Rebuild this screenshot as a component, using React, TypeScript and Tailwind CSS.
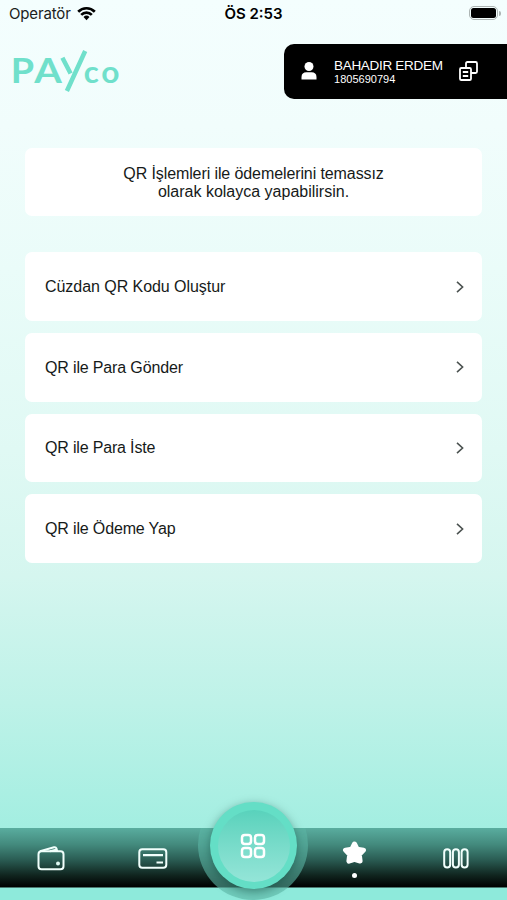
import React from "react";

const items = [
  { label: "Cüzdan QR Kodu Oluştur", spacing: "tracking-[-0.05px]" },
  { label: "QR ile Para Gönder", spacing: "tracking-[-0.15px]" },
  { label: "QR ile Para İste", spacing: "tracking-[-0.17px]" },
  { label: "QR ile Ödeme Yap", spacing: "tracking-[-0.15px]" },
];

function StatusBar() {
  return (
    <div className="grid h-[28px] grid-cols-3 items-center pl-[8px] pr-[8px] font-['Inter',sans-serif] text-[15px] text-[#1b2221]">
      <div className="flex items-center gap-[6px] pl-px">
        <span className="tracking-[-0.15px]">Operatör</span>
        <svg width="19" height="15" viewBox="0 0 19 15" fill="none" stroke="#000" strokeWidth="2.7" className="-mt-[2px]">
          <path d="M1.2 5.7a11.7 11.7 0 0 1 16.6 0" />
          <path d="M4.2 8.9a7.5 7.5 0 0 1 10.6 0" />
          <path d="M9.5 14.2 6.5 11a4.3 4.3 0 0 1 6 0Z" fill="#000" stroke="none" />
        </svg>
      </div>
      <div className="text-center font-semibold text-black">ÖS 2:53</div>
      <div className="-mr-[2px] -mt-[2px] flex items-center justify-end">
        <div className="h-[14px] w-[29px] rounded-[5px] border-[1.5px] border-[#adb5b4] p-[1px]">
          <div className="h-full w-full rounded-[2.5px] bg-black" />
        </div>
        <div className="ml-[1px] h-[5px] w-[2px] rounded-r-full bg-[#adb5b4]" />
      </div>
    </div>
  );
}

function Logo() {
  return (
    <svg width="110" height="46" viewBox="12 48 110 46" className="block">
      <g fill="#70e0cb" fontFamily="Lato, sans-serif" fontWeight="700">
        <text x="10.8" y="82.5" fontSize="34" textLength="23.3" lengthAdjust="spacingAndGlyphs">P</text>
        <text x="34.2" y="82.5" fontSize="34" textLength="27.6" lengthAdjust="spacingAndGlyphs">A</text>
        <text x="83.8" y="82.5" fontSize="30" textLength="15" lengthAdjust="spacingAndGlyphs">c</text>
        <text x="101.3" y="82.5" fontSize="30" textLength="18.2" lengthAdjust="spacingAndGlyphs">o</text>
      </g>
      <path d="M62.4 57.8 70.6 73.5M85.2 51 66.9 91" stroke="#70e0cb" strokeWidth="4.5" fill="none" />
    </svg>
  );
}

function AccountBadge() {
  return (
    <div className="flex h-[55px] w-[223px] items-center rounded-l-[10px] bg-black pl-[17px] text-white">
      <svg width="16" height="18" viewBox="0 0 16 18" fill="#fff">
        <circle cx="8" cy="4.5" r="4.5" />
        <path d="M0.5 17.5v-2.6c0-3 2-4.6 4.8-4.6h5.4c2.8 0 4.8 1.6 4.8 4.6v2.6Z" />
      </svg>
      <div className="ml-[17px] w-[110px] whitespace-nowrap">
        <div className="pt-px text-[13.5px] leading-[15px] tracking-[-0.3px]">BAHADIR ERDEM</div>
        <div className="text-[11px] leading-[13px] tracking-[0.02px]">1805690794</div>
      </div>
      <svg className="ml-[15px]" width="19" height="20" viewBox="0 0 19 20" fill="none" stroke="#fff" strokeWidth="1.8" strokeLinejoin="round">
        <path d="M7 7V2.4Q7 1 8.4 1h8.2Q18 1 18 2.4v8.2Q18 12 16.6 12H12" />
        <rect x="1" y="7" width="11" height="12" rx="1.3" />
        <path d="M3.8 11h5.4M3.8 15h5.4" />
      </svg>
    </div>
  );
}

function BottomBar() {
  return (
    <nav className="relative h-[72px] bg-[#8eeadb]">
      <div className="grid h-[60px] grid-cols-5 border-b border-[#4b786f] bg-[linear-gradient(180deg,#5aad9f_0%,#438a7d_28%,#2a5c53_54%,#10251f_80%,#000_100%)]">
        <div className="flex justify-center pt-[18px]">
          <svg width="28" height="26" viewBox="0 0 28 26" fill="none" stroke="#f1fffc" strokeWidth="2" strokeLinejoin="round">
            <rect x="1.5" y="5.2" width="25" height="18" rx="3" />
            <path d="M3 5.2 17 1.3q1.8-.5 2.4 1l.8 3M13 5.3l7-1.8" />
            <circle cx="21" cy="17.5" r="2" fill="#dff9f2" stroke="none" />
          </svg>
        </div>
        <div className="flex justify-center pl-px pt-[20px]">
          <svg width="30" height="21" viewBox="0 0 30 21" fill="none" stroke="#f1fffc" strokeWidth="2">
            <rect x="1.3" y="1.2" width="27" height="18.5" rx="3" />
            <path d="M5 7.2h20M18.5 14.5h6.5" strokeWidth="2.2" />
          </svg>
        </div>
        <div />
        <div className="flex flex-col items-center pt-[12px]">
          <svg width="25" height="25" viewBox="0 0 25 25" fill="#fff" stroke="#fff" strokeWidth="5" strokeLinejoin="round">
            <path d="m12.5 4 2.6 5.1 6.4 1-4.2 4.4.8 6.6-5.6-1.7-5.6 1.7.8-6.6-4.2-4.4 6.4-1Z" />
          </svg>
          <div className="mt-[8px] size-[5px] rounded-full bg-white" />
        </div>
        <div className="flex justify-center pt-[20px]">
          <svg width="26" height="21" viewBox="0 0 26 21" fill="none" stroke="#f1fffc" strokeWidth="2">
            <rect x="1.2" y="1.3" width="6" height="18.2" rx="3" />
            <rect x="9.9" y="1.3" width="6" height="18.2" rx="3" />
            <rect x="18.6" y="1.3" width="6" height="18.2" rx="3" />
          </svg>
        </div>
      </div>
      <div className="absolute inset-x-0 top-0 h-[72px] overflow-hidden">
        <div className="absolute left-[198px] top-[-38px] size-[110px] rounded-full bg-[#5cb5a5]/60" />
      </div>
      <button className="absolute left-[210px] top-[-26px] flex size-[87px] items-center justify-center rounded-full bg-[#64dec6] shadow-[0_3px_10px_rgba(15,70,60,0.5)]">
        <span className="flex size-[72px] items-center justify-center rounded-full bg-linear-to-b from-[#59d2bc] to-[#94e5d8]">
          <svg width="26" height="26" viewBox="0 0 26 26" fill="none" stroke="#fff" strokeWidth="2.5" className="-ml-[2px]">
            <rect x="2" y="2" width="9" height="9" rx="2.7" />
            <rect x="15" y="2" width="9" height="9" rx="2.7" />
            <rect x="2" y="15" width="9" height="9" rx="2.7" />
            <rect x="15" y="15" width="9" height="9" rx="2.7" />
          </svg>
        </span>
      </button>
    </nav>
  );
}

export default function App() {
  return (
    <div className="flex h-[900px] w-[507px] flex-col overflow-hidden bg-[linear-gradient(180deg,#f4fefe_0%,#f1fdfc_14%,#eafcf9_30%,#e0f9f4_50%,#d5f6ef_64%,#bef2e8_78%,#a3eee1_92%,#8eeadb_100%)] font-['Liberation_Sans',Arial,sans-serif] text-[#161a19]">
      <StatusBar />
      <header className="flex items-start justify-between pl-[12px] pt-[15.5px]">
        <div className="pt-[4.5px]">
          <Logo />
        </div>
        <AccountBadge />
      </header>
      <main className="flex flex-1 flex-col px-[25px] pt-[49.7px]">
        <section className="flex h-[68px] items-center justify-center rounded-[7px] bg-white text-center text-[16px] leading-[18.5px]">
          <p className="pt-[2px]">
            <span className="tracking-[-0.1px]">QR İşlemleri ile ödemelerini temassız</span>
            <br />
            olarak kolayca yapabilirsin.
          </p>
        </section>
        <div className="mt-[36px] flex flex-col gap-[12px]">
          {items.map((item) => (
            <button key={item.label} className="flex h-[68.7px] items-center justify-between rounded-[7px] bg-white pl-[20px] pr-[17px] text-left text-[16px]">
              <span className={"pt-px " + item.spacing}>{item.label}</span>
              <svg width="10" height="14" viewBox="0 0 10 14" fill="none" stroke="#4b5250" strokeWidth="1.6">
                <path d="m2 1.8 5.6 5.2L2 12.2" />
              </svg>
            </button>
          ))}
        </div>
      </main>
      <BottomBar />
    </div>
  );
}
